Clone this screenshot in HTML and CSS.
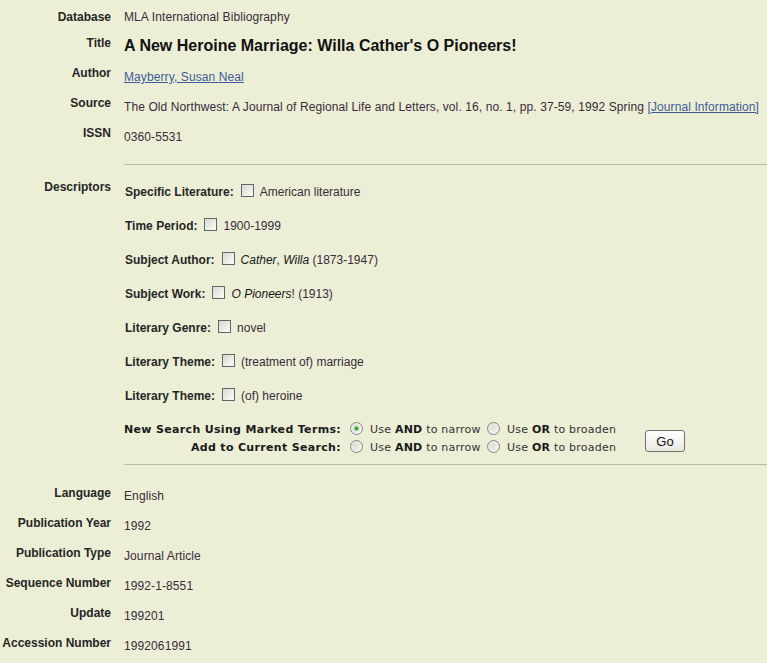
FILE: index.html
```html
<!DOCTYPE html>
<html lang="en">
<head>
    <meta charset="UTF-8">
    <meta name="viewport" content="width=device-width, initial-scale=1.0">
    <title>Detailed Record</title>
    <link rel="stylesheet" href="styles.css">
</head>
<body>
    <div class="record">
        <div class="row first">
            <div class="label">Database</div>
            <div class="value">MLA International Bibliography</div>
        </div>
        <div class="row">
            <div class="label">Title</div>
            <div class="value title">A New Heroine Marriage: Willa Cather's O Pioneers!</div>
        </div>
        <div class="row">
            <div class="label">Author</div>
            <div class="value"><a href="#">Mayberry, Susan Neal</a></div>
        </div>
        <div class="row">
            <div class="label">Source</div>
            <div class="value">The Old Northwest: A Journal of Regional Life and Letters, vol. 16, no. 1, pp. 37-59, 1992 Spring <a href="#">[Journal Information]</a></div>
        </div>
        <div class="row">
            <div class="label">ISSN</div>
            <div class="value">0360-5531</div>
        </div>
    </div>

    <hr class="rule">

    <div class="descriptors">
        <div class="label">Descriptors</div>
        <div class="value">
            <div class="desc"><span class="desc-name">Specific Literature:</span><input type="checkbox" class="box">American literature</div>
            <div class="desc"><span class="desc-name">Time Period:</span><input type="checkbox" class="box">1900-1999</div>
            <div class="desc"><span class="desc-name">Subject Author:</span><input type="checkbox" class="box"><i>Cather</i>, <i>Willa</i> (1873-1947)</div>
            <div class="desc"><span class="desc-name">Subject Work:</span><input type="checkbox" class="box"><i>O Pioneers</i>! (1913)</div>
            <div class="desc"><span class="desc-name">Literary Genre:</span><input type="checkbox" class="box">novel</div>
            <div class="desc"><span class="desc-name">Literary Theme:</span><input type="checkbox" class="box">(treatment of) marriage</div>
            <div class="desc"><span class="desc-name">Literary Theme:</span><input type="checkbox" class="box">(of) heroine</div>

            <form class="search" onsubmit="return false;">
                <div class="search-label">New Search Using Marked Terms:</div>
                <label class="opt"><input type="radio" name="mode" class="radio" checked>Use <b>AND</b> to narrow</label>
                <label class="opt"><input type="radio" name="mode" class="radio">Use <b>OR</b> to broaden</label>
                <button type="submit" class="go">Go</button>
                <div class="search-label">Add to Current Search:</div>
                <label class="opt"><input type="radio" name="mode" class="radio">Use <b>AND</b> to narrow</label>
                <label class="opt"><input type="radio" name="mode" class="radio">Use <b>OR</b> to broaden</label>
            </form>
        </div>
    </div>

    <hr class="rule">

    <div class="record lower">
        <div class="row">
            <div class="label">Language</div>
            <div class="value">English</div>
        </div>
        <div class="row">
            <div class="label">Publication Year</div>
            <div class="value">1992</div>
        </div>
        <div class="row">
            <div class="label">Publication Type</div>
            <div class="value">Journal Article</div>
        </div>
        <div class="row">
            <div class="label">Sequence Number</div>
            <div class="value">1992-1-8551</div>
        </div>
        <div class="row">
            <div class="label">Update</div>
            <div class="value">199201</div>
        </div>
        <div class="row">
            <div class="label">Accession Number</div>
            <div class="value">1992061991</div>
        </div>
    </div>
</body>
</html>
```

FILE: styles.css
```css
body {
    margin: 0;
    background-color: #ecefd6;
    font-family: "Liberation Sans", Arial, sans-serif;
    font-size: 12px;
    line-height: 14px;
    color: #3a2a3a;
    overflow: hidden;
}
a {
    color: #3d5b97;
}
.record {
    padding-bottom: 14px;
}
.row {
    display: grid;
    grid-template-columns: 111px 1fr;
    column-gap: 13px;
    height: 30px;
}
.label {
    text-align: right;
    font-weight: bold;
    color: #262626;
    padding-top: 6px;
    white-space: nowrap;
}
.value {
    padding-top: 10px;
    white-space: nowrap;
    letter-spacing: 0.1px;
}
.first .label {
    padding-top: 10px;
}
.title {
    font-size: 16px;
    line-height: 18px;
    font-weight: bold;
    color: #111;
    padding-top: 7px;
    letter-spacing: 0;
}
.lower {
    padding-top: 14px;
    padding-bottom: 0;
}
.lower .label {
    padding-top: 7px;
}
.rule {
    border: 0;
    border-top: 1px solid #b6baa2;
    height: 0;
    margin: 0 0 0 124px;
}
.descriptors {
    display: grid;
    grid-template-columns: 111px 1fr;
    column-gap: 13px;
    padding-bottom: 7px;
}
.descriptors .label {
    padding-top: 15px;
}
.descriptors > .value {
    padding-top: 10px;
    letter-spacing: 0;
}
.desc {
    line-height: 34px;
    height: 34px;
    padding-left: 1px;
}
.desc-name {
    font-weight: bold;
    color: #262626;
}
.desc i {
    color: #161616;
}
.box {
    appearance: none;
    -webkit-appearance: none;
    width: 13px;
    height: 13px;
    margin: 0 6px 0 7px;
    border: 1px solid #5e676b;
    background: linear-gradient(135deg, #d9d9d2, #fbfbf8);
    vertical-align: -1px;
}
.search {
    display: grid;
    grid-template-columns: 226px 137px 158px auto;
    grid-template-rows: 18px 18px;
    margin-top: 8px;
    font-family: "DejaVu Sans", Verdana, sans-serif;
    font-size: 11px;
    line-height: 18px;
    color: #333;
}
.search-label {
    text-align: right;
    padding-right: 9px;
    font-weight: bold;
    color: #1a1a1a;
    white-space: nowrap;
    letter-spacing: 0.33px;
}
.opt {
    white-space: nowrap;
    letter-spacing: 0.22px;
}
.opt b {
    color: #1a1a1a;
}
.radio {
    appearance: none;
    -webkit-appearance: none;
    width: 13px;
    height: 13px;
    margin: 0 7px 0 0;
    border: 1px solid #7d8785;
    border-radius: 50%;
    background: radial-gradient(circle at 40% 40%, #dddcd4, #fdfdfb);
    vertical-align: -2px;
}
.radio:checked {
    background: radial-gradient(circle, #3fae3f 0, #3fae3f 1.6px, transparent 2.6px), radial-gradient(circle at 40% 40%, #dddcd4, #fdfdfb);
}
.go {
    grid-column: 4;
    grid-row: 1 / span 2;
    align-self: end;
    margin-bottom: 5px;
    width: 40px;
    height: 22px;
    padding: 0;
    border: 1px solid #6f6f6f;
    border-radius: 3px;
    background: linear-gradient(#ffffff, #e9e8e0);
    font-family: "Liberation Sans", Arial, sans-serif;
    font-size: 13px;
    letter-spacing: 0;
    color: #111;
}
```
